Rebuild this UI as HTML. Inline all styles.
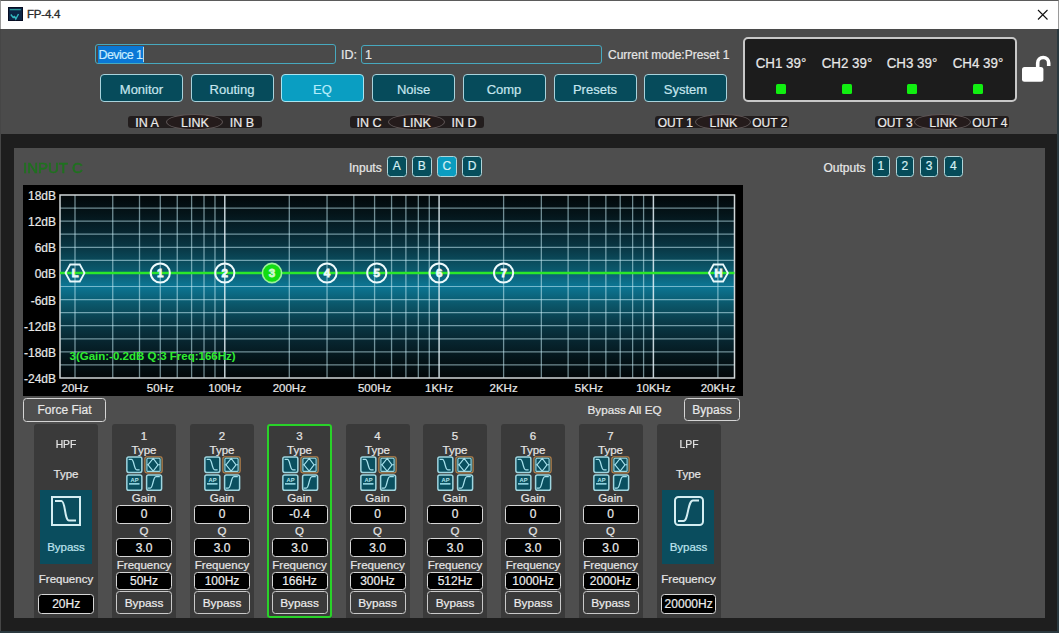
<!DOCTYPE html>
<html><head><meta charset="utf-8"><title>FP-4.4</title>
<style>
*{box-sizing:border-box;margin:0;padding:0}
html,body{width:1059px;height:633px;overflow:hidden;background:#2b393f;font-family:"Liberation Sans",sans-serif;-webkit-text-stroke:0.2px currentColor}
.abs{position:absolute}
.t{position:absolute;white-space:nowrap;line-height:1;}
.c{transform:translateX(-50%)}
.btn{position:absolute;top:74px;width:83px;height:28px;border:1.8px solid #a9d3dc;border-radius:4px;background:#064b5b;color:#c6e6ee;font-size:13px;text-align:center;line-height:29px}
.btn.on{background:#0a9ec2;border-color:#a8e6f2;color:#b4ecfa}
.pill{position:absolute;height:12px;top:116px;background:#221d1d;border-radius:3px}
.link{position:absolute;top:114px;height:16px;border-radius:50%;background:#241b1b;border:1px solid #5e5656}
.lt{position:absolute;top:117px;font-size:12.5px;color:#ececec;line-height:13px;white-space:nowrap}
.sq{position:absolute;top:156.3px;height:20.5px;border:1.6px solid #b0d6da;border-radius:3.5px;background:#064b59;color:#d6f0f4;font-size:12px;text-align:center;line-height:19.5px}
.card{position:absolute;top:424px;width:64px;height:194px;background:#3a3a3a;border-radius:3px 3px 0 0}
.ct{position:absolute;left:0;width:100%;text-align:center;color:#e6e6e6;font-size:11.5px;line-height:12px;white-space:nowrap}
.box{position:absolute;left:4px;width:56px;background:#000;border:1.7px solid #d6d6d6;border-radius:3.5px;color:#ededed;font-size:12px;text-align:center}
.ico{position:absolute;width:17px;height:17px;background:#0a4f60;border:1px solid #a5dbe6;border-radius:2px}
.ylab{position:absolute;right:1003px;font-size:12px;color:#e8e8e8;line-height:12px;white-space:nowrap}
.xlab{position:absolute;top:382px;font-size:11.5px;color:#e8e8e8;line-height:12px;white-space:nowrap;transform:translateX(-50%)}
</style></head><body>

<div class="abs" style="left:0;top:0;width:1057px;height:631px;background:#4b4b4b;border-left:1px solid #464646"></div>
<div class="abs" style="left:0;top:0;width:1059px;height:29px;background:#ffffff;border-top:1px solid #5b5b5b;border-left:1px solid #9a9a9a;border-right:1px solid #9a9a9a"></div>
<div class="abs" style="left:8px;top:6.6px;width:14.7px;height:14.4px;background:#0c2646;border:1px solid #060c22"></div>
<svg class="abs" style="left:8px;top:6.6px" width="15" height="15"><rect x="1.8" y="2" width="11" height="1.3" fill="#2a9898"/><path d="M2.8 7.5 L5.2 10.5 L6.6 9.6 L7.8 12 L10.5 7" stroke="#33b8c0" stroke-width="1.4" fill="none"/></svg>
<div class="t" style="left:27px;top:8.6px;font-size:11.5px;letter-spacing:-0.2px;color:#2a2a2a;-webkit-text-stroke:0.35px #2a2a2a">FP-4.4</div>
<svg class="abs" style="left:1036px;top:8px" width="14" height="14"><path d="M2 2 L11.5 11.5 M11.5 2 L2 11.5" stroke="#111" stroke-width="1.1"/></svg>
<div class="abs" style="left:1px;top:134px;width:1056px;height:497px;background:#1e1e1e"></div>
<div class="abs" style="left:14px;top:148px;width:1031px;height:470px;background:#4e4e4e"></div>
<div class="abs" style="left:95px;top:44px;width:241px;height:20px;border:1.5px solid #47a9bf;border-radius:3px;background:#4a4a4a"></div>
<div class="abs" style="left:98px;top:46px;width:46px;height:16.5px;background:#0a78d6"></div>
<div class="t" style="left:98.5px;top:49px;font-size:12.5px;letter-spacing:-0.6px;color:#c8ecff">Device 1</div>
<div class="abs" style="left:143px;top:47px;width:1px;height:15px;background:#b0d8e8"></div>
<div class="t" style="left:341px;top:49px;font-size:12.5px;color:#e6e6e6">ID:</div>
<div class="abs" style="left:361px;top:45px;width:241px;height:19px;border:1.5px solid #47a9bf;border-radius:3px;background:#4a4a4a"></div>
<div class="t" style="left:365px;top:49px;font-size:12.5px;color:#e6e6e6">1</div>
<div class="t" style="left:608px;top:49px;font-size:12px;color:#e6e6e6">Current mode:Preset 1</div>
<div class="btn" style="left:100px">Monitor</div>
<div class="btn" style="left:190.5px">Routing</div>
<div class="btn on" style="left:281px">EQ</div>
<div class="btn" style="left:372px">Noise</div>
<div class="btn" style="left:462.5px">Comp</div>
<div class="btn" style="left:553.5px">Presets</div>
<div class="btn" style="left:644px">System</div>
<div class="pill" style="left:127.5px;width:134.0px"></div>
<div class="link" style="left:165.5px;width:57.0px"></div>
<div class="lt" style="left:147.0px;font-size:12.5px;transform:translateX(-50%)">IN A</div>
<div class="lt" style="left:195.0px;transform:translateX(-50%)">LINK</div>
<div class="lt" style="left:242.0px;font-size:12.5px;transform:translateX(-50%)">IN B</div>
<div class="pill" style="left:349.5px;width:134.0px"></div>
<div class="link" style="left:387.5px;width:57.0px"></div>
<div class="lt" style="left:369.0px;font-size:12.5px;transform:translateX(-50%)">IN C</div>
<div class="lt" style="left:417.0px;transform:translateX(-50%)">LINK</div>
<div class="lt" style="left:464.0px;font-size:12.5px;transform:translateX(-50%)">IN D</div>
<div class="pill" style="left:655px;width:134px"></div>
<div class="link" style="left:694.5px;width:56.0px"></div>
<div class="lt" style="left:675.25px;font-size:12px;transform:translateX(-50%)">OUT 1</div>
<div class="lt" style="left:723.5px;transform:translateX(-50%)">LINK</div>
<div class="lt" style="left:769.75px;font-size:12px;transform:translateX(-50%)">OUT 2</div>
<div class="pill" style="left:875px;width:134px"></div>
<div class="link" style="left:914px;width:56.5px"></div>
<div class="lt" style="left:895.0px;font-size:12px;transform:translateX(-50%)">OUT 3</div>
<div class="lt" style="left:943.25px;transform:translateX(-50%)">LINK</div>
<div class="lt" style="left:989.75px;font-size:12px;transform:translateX(-50%)">OUT 4</div>
<div class="abs" style="left:742.5px;top:37px;width:274.5px;height:65px;background:#1c1c1c;border:2px solid #c8c8c8;border-radius:5px"></div>
<div class="t c" style="left:781px;top:54.5px;font-size:15px;color:#e8e8e8;transform:translateX(-50%) scaleX(0.89)">CH1 39°</div>
<div class="abs" style="left:776px;top:84px;width:10px;height:10px;background:#11ee11;border-radius:1.5px"></div>
<div class="t c" style="left:846.5px;top:54.5px;font-size:15px;color:#e8e8e8;transform:translateX(-50%) scaleX(0.89)">CH2 39°</div>
<div class="abs" style="left:841.5px;top:84px;width:10px;height:10px;background:#11ee11;border-radius:1.5px"></div>
<div class="t c" style="left:912px;top:54.5px;font-size:15px;color:#e8e8e8;transform:translateX(-50%) scaleX(0.89)">CH3 39°</div>
<div class="abs" style="left:907px;top:84px;width:10px;height:10px;background:#11ee11;border-radius:1.5px"></div>
<div class="t c" style="left:978px;top:54.5px;font-size:15px;color:#e8e8e8;transform:translateX(-50%) scaleX(0.89)">CH4 39°</div>
<div class="abs" style="left:973px;top:84px;width:10px;height:10px;background:#11ee11;border-radius:1.5px"></div>
<svg class="abs" style="left:1020px;top:53px" width="34" height="32"><path d="M17.7 14.5 V10 A5.5 5.5 0 0 1 28.7 10 V13" stroke="#fff" stroke-width="3.6" fill="none"/><rect x="2" y="14" width="21.4" height="14.8" rx="2.5" fill="#fff"/></svg>
<div class="t" style="left:23px;top:160px;font-size:15px;color:#1f741f;-webkit-text-stroke:0.5px #1f701f;filter:blur(0.35px)">INPUT C</div>
<div class="t" style="left:349px;top:161.5px;font-size:12px;color:#e8e8e8">Inputs</div>
<div class="sq" style="left:387.0px;width:19.5px;background:#064e5c">A</div>
<div class="sq" style="left:412.1px;width:19.5px;background:#064e5c">B</div>
<div class="sq" style="left:437.2px;width:19.5px;background:#0a9cc0">C</div>
<div class="sq" style="left:462.3px;width:19.5px;background:#064e5c">D</div>
<div class="t" style="left:823.5px;top:161.5px;font-size:12px;color:#e8e8e8">Outputs</div>
<div class="sq" style="left:871.5px;width:18.5px">1</div>
<div class="sq" style="left:895.7px;width:18.5px">2</div>
<div class="sq" style="left:919.9px;width:18.5px">3</div>
<div class="sq" style="left:944.1px;width:18.5px">4</div>
<div class="abs" style="left:23px;top:185px;width:719.5px;height:210.5px;background:#000"></div>
<svg class="abs" style="left:0;top:0;-webkit-text-stroke:0" width="1059" height="633"><defs><linearGradient id="g" x1="0" y1="0" x2="0" y2="1"><stop offset="0" stop-color="#020709"/><stop offset="0.1" stop-color="#041419"/><stop offset="0.2" stop-color="#07252f"/><stop offset="0.3" stop-color="#093a48"/><stop offset="0.4" stop-color="#0b5669"/><stop offset="0.5" stop-color="#0c7694"/><stop offset="0.6" stop-color="#0b5669"/><stop offset="0.7" stop-color="#093a48"/><stop offset="0.8" stop-color="#07252f"/><stop offset="0.9" stop-color="#041419"/><stop offset="1" stop-color="#020709"/></linearGradient></defs><rect x="60" y="195" width="674.5" height="183" fill="url(#g)"/><line x1="60" x2="734.5" y1="208.07" y2="208.07" stroke="rgba(200,238,248,0.55)" stroke-width="1.2"/><line x1="60" x2="734.5" y1="221.14" y2="221.14" stroke="rgba(200,238,248,0.55)" stroke-width="1.2"/><line x1="60" x2="734.5" y1="234.21" y2="234.21" stroke="rgba(200,238,248,0.55)" stroke-width="1.2"/><line x1="60" x2="734.5" y1="247.29" y2="247.29" stroke="rgba(200,238,248,0.55)" stroke-width="1.2"/><line x1="60" x2="734.5" y1="260.36" y2="260.36" stroke="rgba(200,238,248,0.55)" stroke-width="1.2"/><line x1="60" x2="734.5" y1="273.43" y2="273.43" stroke="rgba(200,238,248,0.55)" stroke-width="1.2"/><line x1="60" x2="734.5" y1="286.50" y2="286.50" stroke="rgba(200,238,248,0.55)" stroke-width="1.2"/><line x1="60" x2="734.5" y1="299.57" y2="299.57" stroke="rgba(200,238,248,0.55)" stroke-width="1.2"/><line x1="60" x2="734.5" y1="312.64" y2="312.64" stroke="rgba(200,238,248,0.55)" stroke-width="1.2"/><line x1="60" x2="734.5" y1="325.71" y2="325.71" stroke="rgba(200,238,248,0.55)" stroke-width="1.2"/><line x1="60" x2="734.5" y1="338.79" y2="338.79" stroke="rgba(200,238,248,0.55)" stroke-width="1.2"/><line x1="60" x2="734.5" y1="351.86" y2="351.86" stroke="rgba(200,238,248,0.55)" stroke-width="1.2"/><line x1="60" x2="734.5" y1="364.93" y2="364.93" stroke="rgba(200,238,248,0.55)" stroke-width="1.2"/><line x1="75.00" x2="75.00" y1="195" y2="378" stroke="rgba(200,238,248,0.55)" stroke-width="1.3"/><line x1="112.74" x2="112.74" y1="195" y2="378" stroke="rgba(200,238,248,0.55)" stroke-width="1.3"/><line x1="139.51" x2="139.51" y1="195" y2="378" stroke="rgba(200,238,248,0.55)" stroke-width="1.3"/><line x1="160.28" x2="160.28" y1="195" y2="378" stroke="rgba(200,238,248,0.55)" stroke-width="1.3"/><line x1="177.25" x2="177.25" y1="195" y2="378" stroke="rgba(200,238,248,0.55)" stroke-width="1.3"/><line x1="191.59" x2="191.59" y1="195" y2="378" stroke="rgba(200,238,248,0.55)" stroke-width="1.3"/><line x1="204.02" x2="204.02" y1="195" y2="378" stroke="rgba(200,238,248,0.55)" stroke-width="1.3"/><line x1="214.98" x2="214.98" y1="195" y2="378" stroke="rgba(200,238,248,0.55)" stroke-width="1.3"/><line x1="224.79" x2="224.79" y1="195" y2="378" stroke="rgba(230,245,250,0.85)" stroke-width="1.5"/><line x1="289.30" x2="289.30" y1="195" y2="378" stroke="rgba(200,238,248,0.55)" stroke-width="1.3"/><line x1="327.04" x2="327.04" y1="195" y2="378" stroke="rgba(200,238,248,0.55)" stroke-width="1.3"/><line x1="353.81" x2="353.81" y1="195" y2="378" stroke="rgba(200,238,248,0.55)" stroke-width="1.3"/><line x1="374.58" x2="374.58" y1="195" y2="378" stroke="rgba(200,238,248,0.55)" stroke-width="1.3"/><line x1="391.55" x2="391.55" y1="195" y2="378" stroke="rgba(200,238,248,0.55)" stroke-width="1.3"/><line x1="405.89" x2="405.89" y1="195" y2="378" stroke="rgba(200,238,248,0.55)" stroke-width="1.3"/><line x1="418.32" x2="418.32" y1="195" y2="378" stroke="rgba(200,238,248,0.55)" stroke-width="1.3"/><line x1="429.28" x2="429.28" y1="195" y2="378" stroke="rgba(200,238,248,0.55)" stroke-width="1.3"/><line x1="439.09" x2="439.09" y1="195" y2="378" stroke="rgba(230,245,250,0.85)" stroke-width="1.5"/><line x1="503.60" x2="503.60" y1="195" y2="378" stroke="rgba(200,238,248,0.55)" stroke-width="1.3"/><line x1="541.34" x2="541.34" y1="195" y2="378" stroke="rgba(200,238,248,0.55)" stroke-width="1.3"/><line x1="568.11" x2="568.11" y1="195" y2="378" stroke="rgba(200,238,248,0.55)" stroke-width="1.3"/><line x1="588.88" x2="588.88" y1="195" y2="378" stroke="rgba(200,238,248,0.55)" stroke-width="1.3"/><line x1="605.85" x2="605.85" y1="195" y2="378" stroke="rgba(200,238,248,0.55)" stroke-width="1.3"/><line x1="620.19" x2="620.19" y1="195" y2="378" stroke="rgba(200,238,248,0.55)" stroke-width="1.3"/><line x1="632.62" x2="632.62" y1="195" y2="378" stroke="rgba(200,238,248,0.55)" stroke-width="1.3"/><line x1="643.58" x2="643.58" y1="195" y2="378" stroke="rgba(200,238,248,0.55)" stroke-width="1.3"/><line x1="653.39" x2="653.39" y1="195" y2="378" stroke="rgba(230,245,250,0.85)" stroke-width="1.5"/><line x1="717.90" x2="717.90" y1="195" y2="378" stroke="rgba(200,238,248,0.55)" stroke-width="1.3"/><rect x="60" y="195" width="674.5" height="183" fill="none" stroke="#d0d6d8" stroke-width="1.5"/><line x1="60" x2="734.5" y1="273" y2="273" stroke="#2ae82a" stroke-width="2.5"/><polygon points="65.5,273.0 70.2,264.5 79.8,264.5 84.5,273.0 79.8,281.5 70.2,281.5" fill="none" stroke="#e8f8fb" stroke-width="1.8"/><text x="75" y="277" text-anchor="middle" style="font:bold 11px &quot;Liberation Sans&quot;" fill="#e8f8fb" stroke="#e8f8fb" stroke-width="0.9">L</text><polygon points="708.9,273.0 713.6,264.5 723.1,264.5 727.9,273.0 723.1,281.5 713.6,281.5" fill="none" stroke="#e8f8fb" stroke-width="1.8"/><text x="718.4" y="277" text-anchor="middle" style="font:bold 11px &quot;Liberation Sans&quot;" fill="#e8f8fb" stroke="#e8f8fb" stroke-width="0.9">H</text><circle cx="160.3" cy="273" r="9.6" fill="none" stroke="#eefafc" stroke-width="2"/><text x="160.3" y="277" text-anchor="middle" style="font:bold 11.5px &quot;Liberation Sans&quot;" fill="#eefafc" stroke="#eefafc" stroke-width="0.8">1</text><circle cx="224.8" cy="273" r="9.6" fill="none" stroke="#eefafc" stroke-width="2"/><text x="224.8" y="277" text-anchor="middle" style="font:bold 11.5px &quot;Liberation Sans&quot;" fill="#eefafc" stroke="#eefafc" stroke-width="0.8">2</text><circle cx="272.0" cy="273" r="9.6" fill="#12dd12" stroke="#9cf29c" stroke-width="1.6"/><text x="272.0" y="277" text-anchor="middle" style="font:bold 11.5px &quot;Liberation Sans&quot;" fill="#d0f8d0" stroke="#d0f8d0" stroke-width="0.8">3</text><circle cx="327.0" cy="273" r="9.6" fill="none" stroke="#eefafc" stroke-width="2"/><text x="327.0" y="277" text-anchor="middle" style="font:bold 11.5px &quot;Liberation Sans&quot;" fill="#eefafc" stroke="#eefafc" stroke-width="0.8">4</text><circle cx="376.8" cy="273" r="9.6" fill="none" stroke="#eefafc" stroke-width="2"/><text x="376.8" y="277" text-anchor="middle" style="font:bold 11.5px &quot;Liberation Sans&quot;" fill="#eefafc" stroke="#eefafc" stroke-width="0.8">5</text><circle cx="439.1" cy="273" r="9.6" fill="none" stroke="#eefafc" stroke-width="2"/><text x="439.1" y="277" text-anchor="middle" style="font:bold 11.5px &quot;Liberation Sans&quot;" fill="#eefafc" stroke="#eefafc" stroke-width="0.8">6</text><circle cx="503.6" cy="273" r="9.6" fill="none" stroke="#eefafc" stroke-width="2"/><text x="503.6" y="277" text-anchor="middle" style="font:bold 11.5px &quot;Liberation Sans&quot;" fill="#eefafc" stroke="#eefafc" stroke-width="0.8">7</text><text x="69.5" y="360" style="font:bold 11.5px &quot;Liberation Sans&quot;" fill="#30ec30">3(Gain:-0.2dB Q:3 Freq:166Hz)</text></svg>
<div class="ylab" style="top:190.0px">18dB</div>
<div class="ylab" style="top:216.1px">12dB</div>
<div class="ylab" style="top:242.3px">6dB</div>
<div class="ylab" style="top:268.4px">0dB</div>
<div class="ylab" style="top:294.6px">-6dB</div>
<div class="ylab" style="top:320.7px">-12dB</div>
<div class="ylab" style="top:346.9px">-18dB</div>
<div class="ylab" style="top:373.0px">-24dB</div>
<div class="xlab" style="left:75.0px">20Hz</div>
<div class="xlab" style="left:160.3px">50Hz</div>
<div class="xlab" style="left:224.8px">100Hz</div>
<div class="xlab" style="left:289.3px">200Hz</div>
<div class="xlab" style="left:374.6px">500Hz</div>
<div class="xlab" style="left:439.1px">1KHz</div>
<div class="xlab" style="left:503.6px">2KHz</div>
<div class="xlab" style="left:588.9px">5KHz</div>
<div class="xlab" style="left:653.4px">10KHz</div>
<div class="xlab" style="left:717.9px">20KHz</div>
<div class="abs" style="left:23px;top:398px;width:83px;height:23.5px;border:1.8px solid #d4d4d4;border-radius:3.5px;background:#4e4e4e;color:#e8e8e8;font-size:12px;text-align:center;line-height:23px">Force Fiat</div>
<div class="t" style="left:587.5px;top:404px;font-size:11.7px;color:#e8e8e8">Bypass All EQ</div>
<div class="abs" style="left:684px;top:398px;width:56px;height:23px;border:1.8px solid #d4d4d4;border-radius:3.5px;background:#4e4e4e;color:#e8e8e8;font-size:12px;text-align:center;line-height:22px">Bypass</div>
<div class="card" style="left:34px">
<div class="ct" style="top:13.6px;transform:scaleX(0.9)">HPF</div>
<div class="ct" style="top:44.3px">Type</div>
<div class="abs" style="left:5.5px;top:66px;width:52px;height:73.5px;background:#0a4d5e"></div>
<svg class="abs" style="left:17px;top:72px" width="30" height="30"><rect x="1" y="1" width="28" height="28" rx="0" fill="none" stroke="#d4eef2" stroke-width="2"/><path d="M4 5 H10.5 C14.5 5 13.5 24.5 18 24.5 H25" stroke="#d4eef2" stroke-width="2" fill="none"/></svg>
<div class="ct" style="top:117px;color:#bfe4ee">Bypass</div>
<div class="ct" style="top:149px">Frequency</div>
<div class="box" style="top:170px;height:19.8px;left:4.3px;width:55.7px;line-height:16.4px;padding-top:1px">20Hz</div>
</div>
<div class="card" style="left:112px">
<div class="ct" style="top:6px">1</div>
<div class="ct" style="top:20px">Type</div>
<svg class="abs" style="left:14px;top:32px" width="38" height="36"><rect x="0.85" y="1" width="15" height="15.4" rx="1.8" fill="#0a4f5f" stroke="#9fd6e0" stroke-width="1.5"/><path d="M2.6 3.4 H5.5 C8.2 3.4 7.8 13.9 10.8 13.9 H13.6" stroke="#a6e0ec" stroke-width="1.3" fill="none"/><rect x="18.9" y="0.9" width="17.2" height="15.9" rx="1.8" fill="#0a4f5f" stroke="#b8804a" stroke-width="1.3"/><rect x="20.9" y="2.2" width="13.2" height="13.2" rx="1" fill="none" stroke="#9fd6e0" stroke-width="1.1"/><path d="M20.9 8.8 H22 L27.2 2.4 L32 8.8 H34.1 M22 8.8 L27.2 15.2 L32 8.8" stroke="#a6e0ec" stroke-width="1.1" fill="none" stroke-linejoin="round"/><rect x="0.85" y="19" width="15" height="15.3" rx="1.8" fill="#0a4f5f" stroke="#9fd6e0" stroke-width="1.5"/><text x="8.6" y="26.2" text-anchor="middle" style="font:bold 5.8px &quot;Liberation Sans&quot;" fill="#b4e4ec">AP</text><rect x="3" y="27" width="10.5" height="1.7" fill="#8ccfdc"/><rect x="20.6" y="19" width="15" height="15.3" rx="1.8" fill="#0a4f5f" stroke="#9fd6e0" stroke-width="1.5"/><path d="M21.6 32.2 H24.2 C27.3 32.2 26.8 20.6 30 20.6 H33.8" stroke="#a6e0ec" stroke-width="1.3" fill="none"/></svg>
<div class="ct" style="top:67.5px">Gain</div>
<div class="box" style="top:80.6px;height:19.2px;line-height:15.8px;padding-top:1.8px">0</div>
<div class="ct" style="top:100.8px">Q</div>
<div class="box" style="top:114px;height:19px;line-height:15.6px;padding-top:2px">3.0</div>
<div class="ct" style="top:134.5px">Frequency</div>
<div class="box" style="top:147.5px;height:18.7px;line-height:15.3px;padding-top:1px">50Hz</div>
<div class="box" style="top:166.7px;height:23.6px;line-height:20.6px;padding-top:1px;background:#3a3a3a;border-color:#cacaca;font-size:11.8px">Bypass</div>
</div>
<div class="card" style="left:190px">
<div class="ct" style="top:6px">2</div>
<div class="ct" style="top:20px">Type</div>
<svg class="abs" style="left:14px;top:32px" width="38" height="36"><rect x="0.85" y="1" width="15" height="15.4" rx="1.8" fill="#0a4f5f" stroke="#9fd6e0" stroke-width="1.5"/><path d="M2.6 3.4 H5.5 C8.2 3.4 7.8 13.9 10.8 13.9 H13.6" stroke="#a6e0ec" stroke-width="1.3" fill="none"/><rect x="18.9" y="0.9" width="17.2" height="15.9" rx="1.8" fill="#0a4f5f" stroke="#b8804a" stroke-width="1.3"/><rect x="20.9" y="2.2" width="13.2" height="13.2" rx="1" fill="none" stroke="#9fd6e0" stroke-width="1.1"/><path d="M20.9 8.8 H22 L27.2 2.4 L32 8.8 H34.1 M22 8.8 L27.2 15.2 L32 8.8" stroke="#a6e0ec" stroke-width="1.1" fill="none" stroke-linejoin="round"/><rect x="0.85" y="19" width="15" height="15.3" rx="1.8" fill="#0a4f5f" stroke="#9fd6e0" stroke-width="1.5"/><text x="8.6" y="26.2" text-anchor="middle" style="font:bold 5.8px &quot;Liberation Sans&quot;" fill="#b4e4ec">AP</text><rect x="3" y="27" width="10.5" height="1.7" fill="#8ccfdc"/><rect x="20.6" y="19" width="15" height="15.3" rx="1.8" fill="#0a4f5f" stroke="#9fd6e0" stroke-width="1.5"/><path d="M21.6 32.2 H24.2 C27.3 32.2 26.8 20.6 30 20.6 H33.8" stroke="#a6e0ec" stroke-width="1.3" fill="none"/></svg>
<div class="ct" style="top:67.5px">Gain</div>
<div class="box" style="top:80.6px;height:19.2px;line-height:15.8px;padding-top:1.8px">0</div>
<div class="ct" style="top:100.8px">Q</div>
<div class="box" style="top:114px;height:19px;line-height:15.6px;padding-top:2px">3.0</div>
<div class="ct" style="top:134.5px">Frequency</div>
<div class="box" style="top:147.5px;height:18.7px;line-height:15.3px;padding-top:1px">100Hz</div>
<div class="box" style="top:166.7px;height:23.6px;line-height:20.6px;padding-top:1px;background:#3a3a3a;border-color:#cacaca;font-size:11.8px">Bypass</div>
</div>
<div class="card" style="left:267.5px">
<div class="ct" style="top:6px">3</div>
<div class="ct" style="top:20px">Type</div>
<svg class="abs" style="left:14px;top:32px" width="38" height="36"><rect x="0.85" y="1" width="15" height="15.4" rx="1.8" fill="#0a4f5f" stroke="#9fd6e0" stroke-width="1.5"/><path d="M2.6 3.4 H5.5 C8.2 3.4 7.8 13.9 10.8 13.9 H13.6" stroke="#a6e0ec" stroke-width="1.3" fill="none"/><rect x="18.9" y="0.9" width="17.2" height="15.9" rx="1.8" fill="#0a4f5f" stroke="#b8804a" stroke-width="1.3"/><rect x="20.9" y="2.2" width="13.2" height="13.2" rx="1" fill="none" stroke="#9fd6e0" stroke-width="1.1"/><path d="M20.9 8.8 H22 L27.2 2.4 L32 8.8 H34.1 M22 8.8 L27.2 15.2 L32 8.8" stroke="#a6e0ec" stroke-width="1.1" fill="none" stroke-linejoin="round"/><rect x="0.85" y="19" width="15" height="15.3" rx="1.8" fill="#0a4f5f" stroke="#9fd6e0" stroke-width="1.5"/><text x="8.6" y="26.2" text-anchor="middle" style="font:bold 5.8px &quot;Liberation Sans&quot;" fill="#b4e4ec">AP</text><rect x="3" y="27" width="10.5" height="1.7" fill="#8ccfdc"/><rect x="20.6" y="19" width="15" height="15.3" rx="1.8" fill="#0a4f5f" stroke="#9fd6e0" stroke-width="1.5"/><path d="M21.6 32.2 H24.2 C27.3 32.2 26.8 20.6 30 20.6 H33.8" stroke="#a6e0ec" stroke-width="1.3" fill="none"/></svg>
<div class="ct" style="top:67.5px">Gain</div>
<div class="box" style="top:80.6px;height:19.2px;line-height:15.8px;padding-top:1.8px">-0.4</div>
<div class="ct" style="top:100.8px">Q</div>
<div class="box" style="top:114px;height:19px;line-height:15.6px;padding-top:2px">3.0</div>
<div class="ct" style="top:134.5px">Frequency</div>
<div class="box" style="top:147.5px;height:18.7px;line-height:15.3px;padding-top:1px">166Hz</div>
<div class="box" style="top:166.7px;height:23.6px;line-height:20.6px;padding-top:1px;background:#3a3a3a;border-color:#cacaca;font-size:11.8px">Bypass</div>
<div class="abs" style="left:-0.5px;top:0;width:65px;height:194px;border:2px solid #29d229;border-radius:3px"></div>
</div>
<div class="card" style="left:345.5px">
<div class="ct" style="top:6px">4</div>
<div class="ct" style="top:20px">Type</div>
<svg class="abs" style="left:14px;top:32px" width="38" height="36"><rect x="0.85" y="1" width="15" height="15.4" rx="1.8" fill="#0a4f5f" stroke="#9fd6e0" stroke-width="1.5"/><path d="M2.6 3.4 H5.5 C8.2 3.4 7.8 13.9 10.8 13.9 H13.6" stroke="#a6e0ec" stroke-width="1.3" fill="none"/><rect x="18.9" y="0.9" width="17.2" height="15.9" rx="1.8" fill="#0a4f5f" stroke="#b8804a" stroke-width="1.3"/><rect x="20.9" y="2.2" width="13.2" height="13.2" rx="1" fill="none" stroke="#9fd6e0" stroke-width="1.1"/><path d="M20.9 8.8 H22 L27.2 2.4 L32 8.8 H34.1 M22 8.8 L27.2 15.2 L32 8.8" stroke="#a6e0ec" stroke-width="1.1" fill="none" stroke-linejoin="round"/><rect x="0.85" y="19" width="15" height="15.3" rx="1.8" fill="#0a4f5f" stroke="#9fd6e0" stroke-width="1.5"/><text x="8.6" y="26.2" text-anchor="middle" style="font:bold 5.8px &quot;Liberation Sans&quot;" fill="#b4e4ec">AP</text><rect x="3" y="27" width="10.5" height="1.7" fill="#8ccfdc"/><rect x="20.6" y="19" width="15" height="15.3" rx="1.8" fill="#0a4f5f" stroke="#9fd6e0" stroke-width="1.5"/><path d="M21.6 32.2 H24.2 C27.3 32.2 26.8 20.6 30 20.6 H33.8" stroke="#a6e0ec" stroke-width="1.3" fill="none"/></svg>
<div class="ct" style="top:67.5px">Gain</div>
<div class="box" style="top:80.6px;height:19.2px;line-height:15.8px;padding-top:1.8px">0</div>
<div class="ct" style="top:100.8px">Q</div>
<div class="box" style="top:114px;height:19px;line-height:15.6px;padding-top:2px">3.0</div>
<div class="ct" style="top:134.5px">Frequency</div>
<div class="box" style="top:147.5px;height:18.7px;line-height:15.3px;padding-top:1px">300Hz</div>
<div class="box" style="top:166.7px;height:23.6px;line-height:20.6px;padding-top:1px;background:#3a3a3a;border-color:#cacaca;font-size:11.8px">Bypass</div>
</div>
<div class="card" style="left:423px">
<div class="ct" style="top:6px">5</div>
<div class="ct" style="top:20px">Type</div>
<svg class="abs" style="left:14px;top:32px" width="38" height="36"><rect x="0.85" y="1" width="15" height="15.4" rx="1.8" fill="#0a4f5f" stroke="#9fd6e0" stroke-width="1.5"/><path d="M2.6 3.4 H5.5 C8.2 3.4 7.8 13.9 10.8 13.9 H13.6" stroke="#a6e0ec" stroke-width="1.3" fill="none"/><rect x="18.9" y="0.9" width="17.2" height="15.9" rx="1.8" fill="#0a4f5f" stroke="#b8804a" stroke-width="1.3"/><rect x="20.9" y="2.2" width="13.2" height="13.2" rx="1" fill="none" stroke="#9fd6e0" stroke-width="1.1"/><path d="M20.9 8.8 H22 L27.2 2.4 L32 8.8 H34.1 M22 8.8 L27.2 15.2 L32 8.8" stroke="#a6e0ec" stroke-width="1.1" fill="none" stroke-linejoin="round"/><rect x="0.85" y="19" width="15" height="15.3" rx="1.8" fill="#0a4f5f" stroke="#9fd6e0" stroke-width="1.5"/><text x="8.6" y="26.2" text-anchor="middle" style="font:bold 5.8px &quot;Liberation Sans&quot;" fill="#b4e4ec">AP</text><rect x="3" y="27" width="10.5" height="1.7" fill="#8ccfdc"/><rect x="20.6" y="19" width="15" height="15.3" rx="1.8" fill="#0a4f5f" stroke="#9fd6e0" stroke-width="1.5"/><path d="M21.6 32.2 H24.2 C27.3 32.2 26.8 20.6 30 20.6 H33.8" stroke="#a6e0ec" stroke-width="1.3" fill="none"/></svg>
<div class="ct" style="top:67.5px">Gain</div>
<div class="box" style="top:80.6px;height:19.2px;line-height:15.8px;padding-top:1.8px">0</div>
<div class="ct" style="top:100.8px">Q</div>
<div class="box" style="top:114px;height:19px;line-height:15.6px;padding-top:2px">3.0</div>
<div class="ct" style="top:134.5px">Frequency</div>
<div class="box" style="top:147.5px;height:18.7px;line-height:15.3px;padding-top:1px">512Hz</div>
<div class="box" style="top:166.7px;height:23.6px;line-height:20.6px;padding-top:1px;background:#3a3a3a;border-color:#cacaca;font-size:11.8px">Bypass</div>
</div>
<div class="card" style="left:501px">
<div class="ct" style="top:6px">6</div>
<div class="ct" style="top:20px">Type</div>
<svg class="abs" style="left:14px;top:32px" width="38" height="36"><rect x="0.85" y="1" width="15" height="15.4" rx="1.8" fill="#0a4f5f" stroke="#9fd6e0" stroke-width="1.5"/><path d="M2.6 3.4 H5.5 C8.2 3.4 7.8 13.9 10.8 13.9 H13.6" stroke="#a6e0ec" stroke-width="1.3" fill="none"/><rect x="18.9" y="0.9" width="17.2" height="15.9" rx="1.8" fill="#0a4f5f" stroke="#b8804a" stroke-width="1.3"/><rect x="20.9" y="2.2" width="13.2" height="13.2" rx="1" fill="none" stroke="#9fd6e0" stroke-width="1.1"/><path d="M20.9 8.8 H22 L27.2 2.4 L32 8.8 H34.1 M22 8.8 L27.2 15.2 L32 8.8" stroke="#a6e0ec" stroke-width="1.1" fill="none" stroke-linejoin="round"/><rect x="0.85" y="19" width="15" height="15.3" rx="1.8" fill="#0a4f5f" stroke="#9fd6e0" stroke-width="1.5"/><text x="8.6" y="26.2" text-anchor="middle" style="font:bold 5.8px &quot;Liberation Sans&quot;" fill="#b4e4ec">AP</text><rect x="3" y="27" width="10.5" height="1.7" fill="#8ccfdc"/><rect x="20.6" y="19" width="15" height="15.3" rx="1.8" fill="#0a4f5f" stroke="#9fd6e0" stroke-width="1.5"/><path d="M21.6 32.2 H24.2 C27.3 32.2 26.8 20.6 30 20.6 H33.8" stroke="#a6e0ec" stroke-width="1.3" fill="none"/></svg>
<div class="ct" style="top:67.5px">Gain</div>
<div class="box" style="top:80.6px;height:19.2px;line-height:15.8px;padding-top:1.8px">0</div>
<div class="ct" style="top:100.8px">Q</div>
<div class="box" style="top:114px;height:19px;line-height:15.6px;padding-top:2px">3.0</div>
<div class="ct" style="top:134.5px">Frequency</div>
<div class="box" style="top:147.5px;height:18.7px;line-height:15.3px;padding-top:1px">1000Hz</div>
<div class="box" style="top:166.7px;height:23.6px;line-height:20.6px;padding-top:1px;background:#3a3a3a;border-color:#cacaca;font-size:11.8px">Bypass</div>
</div>
<div class="card" style="left:578.5px">
<div class="ct" style="top:6px">7</div>
<div class="ct" style="top:20px">Type</div>
<svg class="abs" style="left:14px;top:32px" width="38" height="36"><rect x="0.85" y="1" width="15" height="15.4" rx="1.8" fill="#0a4f5f" stroke="#9fd6e0" stroke-width="1.5"/><path d="M2.6 3.4 H5.5 C8.2 3.4 7.8 13.9 10.8 13.9 H13.6" stroke="#a6e0ec" stroke-width="1.3" fill="none"/><rect x="18.9" y="0.9" width="17.2" height="15.9" rx="1.8" fill="#0a4f5f" stroke="#b8804a" stroke-width="1.3"/><rect x="20.9" y="2.2" width="13.2" height="13.2" rx="1" fill="none" stroke="#9fd6e0" stroke-width="1.1"/><path d="M20.9 8.8 H22 L27.2 2.4 L32 8.8 H34.1 M22 8.8 L27.2 15.2 L32 8.8" stroke="#a6e0ec" stroke-width="1.1" fill="none" stroke-linejoin="round"/><rect x="0.85" y="19" width="15" height="15.3" rx="1.8" fill="#0a4f5f" stroke="#9fd6e0" stroke-width="1.5"/><text x="8.6" y="26.2" text-anchor="middle" style="font:bold 5.8px &quot;Liberation Sans&quot;" fill="#b4e4ec">AP</text><rect x="3" y="27" width="10.5" height="1.7" fill="#8ccfdc"/><rect x="20.6" y="19" width="15" height="15.3" rx="1.8" fill="#0a4f5f" stroke="#9fd6e0" stroke-width="1.5"/><path d="M21.6 32.2 H24.2 C27.3 32.2 26.8 20.6 30 20.6 H33.8" stroke="#a6e0ec" stroke-width="1.3" fill="none"/></svg>
<div class="ct" style="top:67.5px">Gain</div>
<div class="box" style="top:80.6px;height:19.2px;line-height:15.8px;padding-top:1.8px">0</div>
<div class="ct" style="top:100.8px">Q</div>
<div class="box" style="top:114px;height:19px;line-height:15.6px;padding-top:2px">3.0</div>
<div class="ct" style="top:134.5px">Frequency</div>
<div class="box" style="top:147.5px;height:18.7px;line-height:15.3px;padding-top:1px">2000Hz</div>
<div class="box" style="top:166.7px;height:23.6px;line-height:20.6px;padding-top:1px;background:#3a3a3a;border-color:#cacaca;font-size:11.8px">Bypass</div>
</div>
<div class="card" style="left:656.5px">
<div class="ct" style="top:13.6px;transform:scaleX(0.9)">LPF</div>
<div class="ct" style="top:44.3px">Type</div>
<div class="abs" style="left:5.5px;top:66px;width:52px;height:73.5px;background:#0a4d5e"></div>
<svg class="abs" style="left:17px;top:72px" width="30" height="30"><rect x="1" y="1" width="28" height="28" rx="3.5" fill="none" stroke="#d4eef2" stroke-width="2"/><path d="M4 25 H9.5 C14.5 25 13.5 4.5 19 4.5 H25" stroke="#d4eef2" stroke-width="2" fill="none"/></svg>
<div class="ct" style="top:117px;color:#bfe4ee">Bypass</div>
<div class="ct" style="top:149px">Frequency</div>
<div class="box" style="top:170px;height:19.8px;left:4.3px;width:55.7px;line-height:16.4px;padding-top:1px">20000Hz</div>
</div>
</body></html>
